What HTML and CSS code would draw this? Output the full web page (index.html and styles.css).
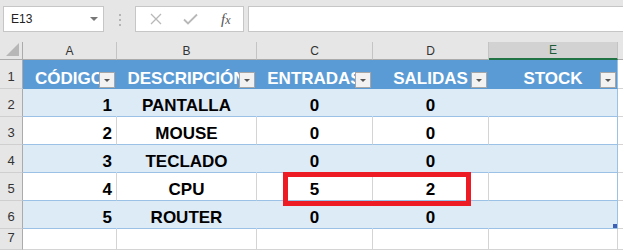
FILE: index.html
```html
<!DOCTYPE html>
<html lang="es">
<head>
    <meta charset="UTF-8">
    <meta name="viewport" content="width=device-width, initial-scale=1.0">
    <title>Inventario</title>
    <link rel="stylesheet" href="styles.css">
</head>
<body>
    <div class="formula-bar">
        <div class="name-box">
            <span>E13</span>
            <span class="name-arrow"></span>
        </div>
        <div class="grip"><i></i><i></i><i></i></div>
        <div class="fx-buttons">
            <svg class="icon-x" width="12" height="12" viewBox="0 0 12 12">
                <path d="M1 1 L11 11 M11 1 L1 11" stroke="#b8b8b8" stroke-width="1.3" fill="none"/>
            </svg>
            <svg class="icon-check" width="15" height="12" viewBox="0 0 15 12">
                <path d="M1 6.5 L5 10.5 L14 1.5" stroke="#b8b8b8" stroke-width="1.8" fill="none"/>
            </svg>
            <span class="icon-fx">f<span>x</span></span>
        </div>
        <div class="formula-input"></div>
    </div>

    <div class="sheet">
        <!-- column letters -->
        <div class="corner">
            <svg width="13" height="13" viewBox="0 0 13 13"><polygon points="13,0 13,13 0,13" fill="#b7b7b7"/></svg>
        </div>
        <div class="col-head">A</div>
        <div class="col-head">B</div>
        <div class="col-head">C</div>
        <div class="col-head">D</div>
        <div class="col-head selected">E</div>
        <div class="col-head last"></div>

        <!-- row 1: table header -->
        <div class="row-head">1</div>
        <div class="cell th">CÓDIGO<span class="filter"></span></div>
        <div class="cell th">DESCRIPCIÓN<span class="filter"></span></div>
        <div class="cell th">ENTRADAS<span class="filter"></span></div>
        <div class="cell th">SALIDAS<span class="filter"></span></div>
        <div class="cell th edge">STOCK<span class="filter"></span></div>
        <div class="cell out"></div>

        <div class="row-head">2</div>
        <div class="cell band num">1</div>
        <div class="cell band">PANTALLA</div>
        <div class="cell band">0</div>
        <div class="cell band">0</div>
        <div class="cell band edge"></div>
        <div class="cell out"></div>

        <div class="row-head">3</div>
        <div class="cell plain num">2</div>
        <div class="cell plain">MOUSE</div>
        <div class="cell plain">0</div>
        <div class="cell plain">0</div>
        <div class="cell plain edge"></div>
        <div class="cell out"></div>

        <div class="row-head">4</div>
        <div class="cell band num">3</div>
        <div class="cell band">TECLADO</div>
        <div class="cell band">0</div>
        <div class="cell band">0</div>
        <div class="cell band edge"></div>
        <div class="cell out"></div>

        <div class="row-head">5</div>
        <div class="cell plain num">4</div>
        <div class="cell plain">CPU</div>
        <div class="cell plain">5</div>
        <div class="cell plain">2</div>
        <div class="cell plain edge"></div>
        <div class="cell out"></div>

        <div class="row-head">6</div>
        <div class="cell band num">5</div>
        <div class="cell band">ROUTER</div>
        <div class="cell band">0</div>
        <div class="cell band">0</div>
        <div class="cell band edge"><span class="resize"></span></div>
        <div class="cell out"></div>

        <div class="row-head">7</div>
        <div class="cell out"></div>
        <div class="cell out"></div>
        <div class="cell out"></div>
        <div class="cell out"></div>
        <div class="cell out"></div>
        <div class="cell out"></div>

        <div class="highlight"></div>
    </div>
</body>
</html>
```

FILE: styles.css
```css
* {
    box-sizing: border-box;
    margin: 0;
    padding: 0;
}

body {
    width: 623px;
    height: 250px;
    overflow: hidden;
    background-color: #e6e6e6;
    font-family: "Liberation Sans", Arial, sans-serif;
}

/* formula bar */
.formula-bar {
    display: flex;
    align-items: flex-start;
    height: 42px;
    padding-top: 6px;
}

.name-box {
    display: flex;
    align-items: center;
    justify-content: space-between;
    width: 101px;
    height: 26px;
    margin-left: 3px;
    padding: 0 5px 0 7px;
    border: 1px solid #c6c6c6;
    background-color: #fff;
    font-size: 12px;
    color: #222;
}

.name-arrow {
    width: 0;
    height: 0;
    border-left: 4px solid transparent;
    border-right: 4px solid transparent;
    border-top: 4px solid #777;
}

.grip {
    display: flex;
    flex-direction: column;
    gap: 3px;
    width: 2px;
    margin: 8px 14px 0 15px;
}

.grip i {
    display: block;
    width: 2px;
    height: 2px;
    background-color: #b4b4b4;
}

.fx-buttons {
    display: flex;
    align-items: center;
    width: 109px;
    height: 26px;
    padding-left: 14px;
    border: 1px solid #c6c6c6;
    background-color: #fff;
}

.icon-check {
    margin-left: 21px;
}

.icon-fx {
    margin-left: 23px;
    font-family: "Liberation Serif", serif;
    font-style: italic;
    font-size: 15px;
    color: #555;
}

.icon-fx span {
    font-size: 12px;
}

.formula-input {
    flex: 1;
    height: 26px;
    margin-left: 4px;
    border: 1px solid #c6c6c6;
    border-right: none;
    background-color: #fff;
}

/* grid */
.sheet {
    position: relative;
    display: grid;
    grid-template-columns: 23px 94px 140px 116px 116px 129px 5px;
    grid-template-rows: 18px 29px repeat(5, 28px) 21px;
}

.corner {
    display: flex;
    align-items: flex-end;
    justify-content: flex-end;
    padding: 0 3px 3px 0;
    border-right: 1px solid #ababab;
    border-bottom: 1px solid #ababab;
}

.col-head {
    display: flex;
    align-items: center;
    justify-content: center;
    border-right: 1px solid #c4c4c4;
    border-bottom: 1px solid #ababab;
    font-size: 12px;
    color: #333;
}

.col-head.selected {
    background-color: #d2d2d2;
    border-bottom: 2px solid #217346;
    color: #1d5c38;
}

.col-head.last {
    border-right: none;
}

.row-head {
    display: flex;
    align-items: flex-end;
    justify-content: center;
    padding-bottom: 4px;
    border-right: 1px solid #ababab;
    border-bottom: 1px solid #cfcfcf;
    font-size: 13px;
    color: #333;
}

.cell {
    position: relative;
    display: flex;
    align-items: flex-end;
    justify-content: center;
    padding: 0 4px 1px;
    overflow: hidden;
    white-space: nowrap;
    font-size: 17px;
    font-weight: bold;
    line-height: 19px;
    color: #000;
    border-right: 1px solid #d4d4d4;
    border-bottom: 1px solid #9bc2e6;
}

.cell.num {
    justify-content: flex-end;
}

.cell.th {
    background-color: #5b9bd5;
    color: #fff;
    padding-bottom: 0;
    border-right-color: #5b9bd5;
    border-bottom-color: #5b9bd5;
}

.cell.band {
    background-color: #ddebf7;
    border-right-color: #ddebf7;
}

.cell.plain {
    background-color: #fff;
}

.cell.edge {
    border-right-color: #9bc2e6;
}

.cell.out {
    background-color: #fff;
    border-bottom-color: #d4d4d4;
}

.filter {
    position: absolute;
    right: 1px;
    bottom: 0;
    width: 16px;
    height: 16px;
    border: 1px solid #a6a6a6;
    background-color: #f2f2f2;
}

.filter::after {
    content: "";
    position: absolute;
    left: 4px;
    top: 6px;
    border-left: 3px solid transparent;
    border-right: 3px solid transparent;
    border-top: 3px solid #555;
}

.resize {
    position: absolute;
    right: 0;
    bottom: 0;
    width: 4px;
    height: 4px;
    background-color: #3f5fb5;
}

.highlight {
    position: absolute;
    left: 283px;
    top: 130px;
    width: 188px;
    height: 34px;
    border: 5px solid #ed1c24;
}
```
